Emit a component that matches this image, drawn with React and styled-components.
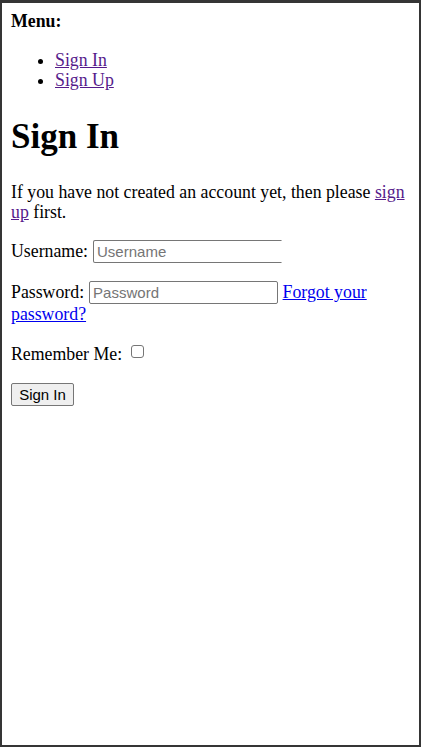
import React from "react";
import styled, { createGlobalStyle } from "styled-components";

const Global = createGlobalStyle`
  html, body { margin: 0; padding: 0; background: #ffffff; }
  #root { height: 747px; }
`;

const Frame = styled.div`
  box-sizing: border-box;
  height: 747px;
  border-style: solid;
  border-color: #353535;
  border-width: 3px 2px 2px 2px;
  padding: 8px 8px 8px 9px;
  font-family: "Liberation Serif", "Times New Roman", serif;
  font-size: 17.8px;
  line-height: 20.2px;
  color: #000;
`;

const MenuTitle = styled.div`
  font-weight: bold;
  margin: 0;
`;

const MenuList = styled.ul`
  margin: 19px 0 0 0;
  padding-left: 44px;
  list-style: disc;
`;

const Item = styled.li`
  line-height: 20.2px;
`;

const Link = styled.a`
  color: ${(p) => (p.$visited ? "#551a8b" : "#0000ee")};
  text-decoration: underline;
  cursor: pointer;
`;

const Title = styled.h1`
  font-size: 35px;
  font-weight: bold;
  margin: 26px 0 25px 0;
  line-height: 40px;
`;

const Para = styled.p`
  margin: ${(p) => p.$margin || "0 0 18px 0"};
`;

const Label = styled.label`
  margin-right: ${(p) => p.$gap || "5px"};
`;

const TextInput = styled.input`
  box-sizing: border-box;
  width: 189px;
  height: 23px;
  padding: 1px 3px;
  font-family: "Liberation Sans", Arial, sans-serif;
  font-size: 15px;
  border: 1px solid #767676;
  border-right-color: ${(p) => (p.$cut ? "transparent" : "#767676")};
  border-radius: ${(p) => (p.$cut ? "2px 0 0 2px" : "2px")};
  vertical-align: baseline;
  color: #000;
  &::placeholder { color: #757575; }
`;

const Check = styled.input`
  appearance: none;
  box-sizing: border-box;
  width: 13px;
  height: 13px;
  margin: 0 0 0 4px;
  border: 1px solid #767676;
  border-radius: 3px;
  background: #fff;
  vertical-align: 2px;
`;

const Button = styled.button`
  box-sizing: border-box;
  width: 63px;
  height: 23px;
  padding: 0;
  font-family: "Liberation Sans", Arial, sans-serif;
  font-size: 15px;
  color: #000;
  background: #efefef;
  border: 1px solid #767676;
  border-radius: 2px;
`;

export default function App() {
  return (
    <>
      <Global />
      <Frame>
        <MenuTitle>Menu:</MenuTitle>
        <MenuList>
          <Item><Link $visited>Sign In</Link></Item>
          <Item><Link $visited>Sign Up</Link></Item>
        </MenuList>
        <Title>Sign In</Title>
        <Para>
          If you have not created an account yet, then please{" "}
          <Link $visited>sign up</Link> first.
        </Para>
        <Para>
          <Label>Username:</Label>
          <TextInput $cut placeholder="Username" />
        </Para>
        <Para $margin="0 0 20px 0">
          <Label>Password:</Label>
          <TextInput placeholder="Password" /> <Link>Forgot your password?</Link>
        </Para>
        <Para $margin="0 0 19px 0">
          <Label $gap="5px">Remember Me:</Label>
          <Check type="checkbox" />
        </Para>
        <Para>
          <Button>Sign In</Button>
        </Para>
      </Frame>
    </>
  );
}
